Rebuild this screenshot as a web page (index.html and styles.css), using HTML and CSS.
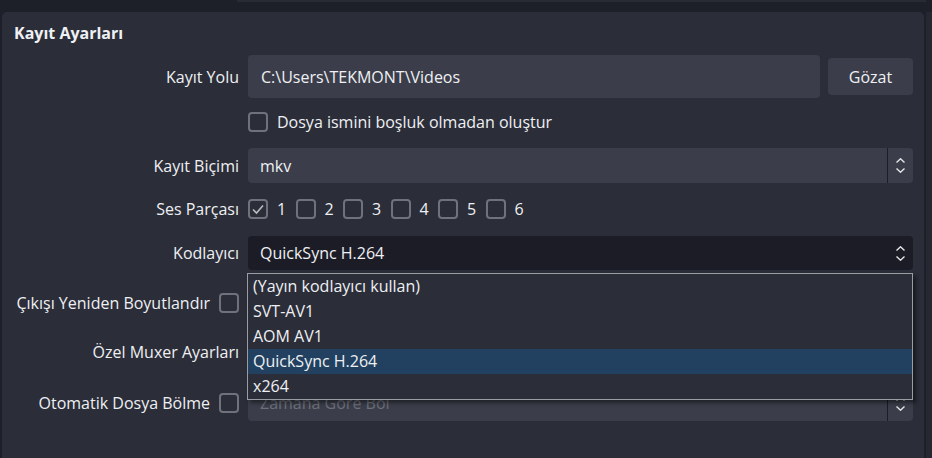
FILE: index.html
```html
<!DOCTYPE html>
<html lang="tr">
<head>
<meta charset="utf-8">
<link rel="stylesheet" href="styles.css">
</head>
<body>
<div class="main">
  <div class="topline"></div>
  <section class="panel">
    <h2 class="title">Kayıt Ayarları</h2>

    <div class="row r1">
      <div class="label">Kayıt Yolu</div>
      <div class="field pathfield">
        <div class="input">C:\Users\TEKMONT\Videos</div>
        <div class="button">Gözat</div>
      </div>
    </div>

    <div class="row r2">
      <div class="label"></div>
      <div class="field checkline">
        <span class="cb"></span>
        <span class="cbtext">Dosya ismini boşluk olmadan oluştur</span>
      </div>
    </div>

    <div class="row r3">
      <div class="label">Kayıt Biçimi</div>
      <div class="field">
        <div class="combo">
          <span class="ctext">mkv</span>
          <span class="spin sep">
            <svg width="9" height="5" viewBox="0 0 9 5"><polyline points="0.5,4.5 4.5,0.8 8.5,4.5" fill="none" stroke="#e8e8ea" stroke-width="1.4"/></svg>
            <svg width="9" height="5" viewBox="0 0 9 5"><polyline points="0.5,0.5 4.5,4.2 8.5,0.5" fill="none" stroke="#e8e8ea" stroke-width="1.4"/></svg>
          </span>
        </div>
      </div>
    </div>

    <div class="row r4">
      <div class="label">Ses Parçası</div>
      <div class="field tracks">
        <span class="track"><span class="cb checked"><svg width="16" height="16" viewBox="0 0 16 16"><polyline points="3,8.5 6.5,12 13,4.5" fill="none" stroke="#b9babe" stroke-width="1.6"/></svg></span><span class="num">1</span></span>
        <span class="track"><span class="cb"></span><span class="num">2</span></span>
        <span class="track"><span class="cb"></span><span class="num">3</span></span>
        <span class="track"><span class="cb"></span><span class="num">4</span></span>
        <span class="track"><span class="cb"></span><span class="num">5</span></span>
        <span class="track"><span class="cb"></span><span class="num">6</span></span>
      </div>
    </div>

    <div class="row r5">
      <div class="label">Kodlayıcı</div>
      <div class="field">
        <div class="combo focused">
          <span class="ctext">QuickSync H.264</span>
          <span class="spin">
            <svg width="9" height="5" viewBox="0 0 9 5"><polyline points="0.5,4.5 4.5,0.8 8.5,4.5" fill="none" stroke="#e8e8ea" stroke-width="1.4"/></svg>
            <svg width="9" height="5" viewBox="0 0 9 5"><polyline points="0.5,0.5 4.5,4.2 8.5,0.5" fill="none" stroke="#e8e8ea" stroke-width="1.4"/></svg>
          </span>
          <ul class="popup">
            <li>(Yayın kodlayıcı kullan)</li>
            <li>SVT-AV1</li>
            <li>AOM AV1</li>
            <li class="sel">QuickSync H.264</li>
            <li>x264</li>
          </ul>
        </div>
      </div>
    </div>

    <div class="row r6">
      <div class="label withcb"><span>Çıkışı Yeniden Boyutlandır</span><span class="cb"></span></div>
      <div class="field">
        <div class="combo disabled"></div>
      </div>
    </div>

    <div class="row r7">
      <div class="label">Özel Muxer Ayarları</div>
      <div class="field">
        <div class="input small"></div>
      </div>
    </div>

    <div class="row r8">
      <div class="label withcb"><span>Otomatik Dosya Bölme</span><span class="cb"></span></div>
      <div class="field">
        <div class="combo disabled">
          <span class="ctext">Zamana Göre Böl</span>
          <span class="spin sep">
            <svg width="9" height="5" viewBox="0 0 9 5"><polyline points="0.5,4.5 4.5,0.8 8.5,4.5" fill="none" stroke="#e8e8ea" stroke-width="1.4"/></svg>
            <svg width="9" height="5" viewBox="0 0 9 5"><polyline points="0.5,0.5 4.5,4.2 8.5,0.5" fill="none" stroke="#e8e8ea" stroke-width="1.4"/></svg>
          </span>
        </div>
      </div>
    </div>
  </section>
</div>
<div class="scrolltrack"></div>
</body>
</html>
```

FILE: styles.css
```css
* { box-sizing: border-box; }
html, body {
  margin: 0;
  padding: 0;
  height: 458px;
  overflow: hidden;
}
body {
  background: #1e2029;
  font-family: "Open Sans", "Noto Sans", sans-serif;
  font-size: 16px;
  color: #eef0f3;
  display: flex;
}
.main {
  flex: 1;
  min-width: 0;
}
.topline {
  height: 2px;
  margin-left: 237px;
  background: #282a34;
}
.panel {
  margin: 10px 2px 0 2px;
  background: #2b2d38;
  border-radius: 5px 5px 0 0;
  padding: 11px 11px 0 12px;
  height: 446px;
}
.scrolltrack {
  width: 6px;
  background: #252731;
  margin-top: 12px;
}
.title {
  margin: 0 0 10px 0;
  font-size: 16px;
  font-weight: 700;
  line-height: 20px;
}
.row {
  display: grid;
  grid-template-columns: 225px 1fr;
  column-gap: 9px;
  align-items: center;
}
.r1 { height: 47px; }
.r2 { height: 44px; }
.r3 { height: 43px; }
.r4 { height: 44px; }
.r5 { height: 44px; }
.r6 { height: 56px; }
.r7 { height: 42px; }
.r8 { height: 60px; }
.label {
  text-align: right;
  white-space: nowrap;
  line-height: 20px;
}
.label.withcb {
  display: flex;
  justify-content: flex-end;
  align-items: center;
  gap: 9px;
}
.field {
  min-width: 0;
}
.pathfield {
  display: flex;
  align-items: center;
}
.input {
  flex: 1;
  height: 43px;
  background: #3b3e4a;
  border-radius: 4px;
  padding: 0 13px;
  display: flex;
  align-items: center;
}
.input.small { height: 34px; }
.button {
  width: 85px;
  height: 37px;
  margin-left: 8px;
  background: #3b3e4a;
  border-radius: 4px;
  display: flex;
  align-items: center;
  justify-content: center;
}
.cb {
  width: 20px;
  height: 20px;
  flex: none;
  border: 2px solid #6f727b;
  border-radius: 4px;
  display: inline-flex;
  align-items: center;
  justify-content: center;
}
.checkline {
  display: flex;
  align-items: center;
  gap: 9px;
}
.tracks {
  display: flex;
  align-items: center;
  gap: 9.5px;
}
.track {
  display: flex;
  align-items: center;
  gap: 9px;
  width: 38px;
}
.combo {
  position: relative;
  height: 35px;
  background: #3b3e4a;
  border-radius: 4px;
  display: flex;
  align-items: center;
}
.r5 .combo { height: 34px; }
.combo.focused { background: #1b1c26; }
.ctext {
  flex: 1;
  padding-left: 12px;
}
.combo.disabled .ctext { color: #6d707a; }
.spin {
  width: 26px;
  height: 100%;
  margin-left: auto;
  display: flex;
  flex-direction: column;
  align-items: center;
  justify-content: center;
  gap: 5px;
}
.spin.sep {
  border-left: 1px solid #1c1d25;
}
.popup {
  position: absolute;
  left: -1px;
  top: 37px;
  width: 666px;
  margin: 0;
  padding: 0;
  list-style: none;
  background: #2b2d38;
  border: 1px solid #9a9ca4;
  box-shadow: 3px 3px 4px rgba(0, 0, 0, 0.45);
  z-index: 5;
}
.popup li {
  height: 25px;
  line-height: 25px;
  padding-left: 5px;
}
.popup li.sel {
  background: #22405f;
}
```
